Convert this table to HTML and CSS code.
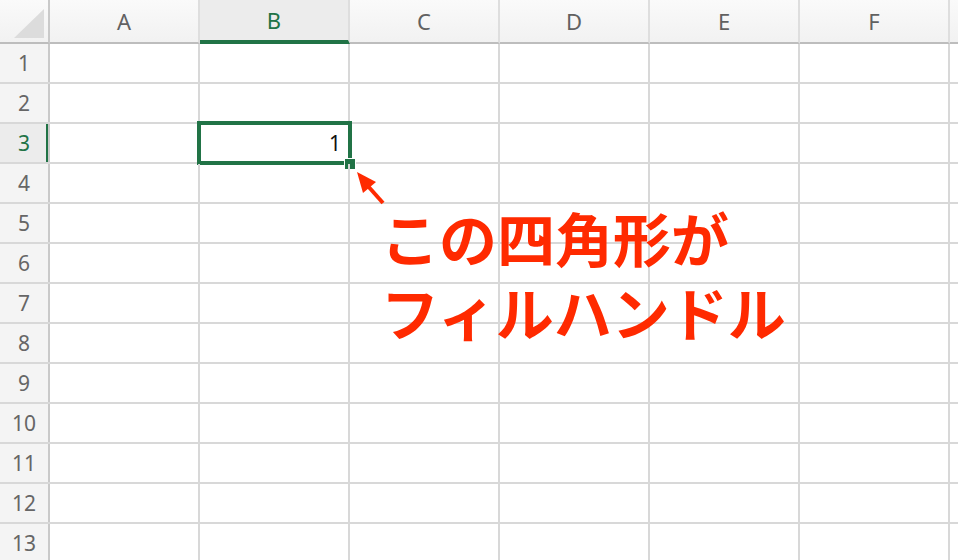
FILE: index.html
```html
<!DOCTYPE html>
<html>
<head>
    <title>フィルハンドル</title>
    <link rel="stylesheet" href="styles.css">
</head>
<body>
    <div class="sheet">
        <div class="row head">
            <div class="rh corner">
                <svg width="48" height="42" viewBox="0 0 48 42"><polygon points="14,38 44,38 44,9" fill="#dcdcdc"/></svg>
            </div>
            <div class="cell ch">A</div>
            <div class="cell ch active-col">B</div>
            <div class="cell ch">C</div>
            <div class="cell ch">D</div>
            <div class="cell ch">E</div>
            <div class="cell ch">F</div>
            <div class="cell ch"></div>
        </div>
        <div class="row"><div class="rh">1</div><div class="cell"></div><div class="cell"></div><div class="cell"></div><div class="cell"></div><div class="cell"></div><div class="cell"></div><div class="cell"></div></div>
        <div class="row"><div class="rh">2</div><div class="cell"></div><div class="cell"></div><div class="cell"></div><div class="cell"></div><div class="cell"></div><div class="cell"></div><div class="cell"></div></div>
        <div class="row">
            <div class="rh active-row">3</div>
            <div class="cell"></div>
            <div class="cell selected">
                <span class="value">1</span>
                <div class="sel-box"></div>
                <div class="fill-handle"></div>
            </div>
            <div class="cell"></div><div class="cell"></div><div class="cell"></div><div class="cell"></div><div class="cell"></div>
        </div>
        <div class="row"><div class="rh">4</div><div class="cell"></div><div class="cell"></div><div class="cell"></div><div class="cell"></div><div class="cell"></div><div class="cell"></div><div class="cell"></div></div>
        <div class="row"><div class="rh">5</div><div class="cell"></div><div class="cell"></div><div class="cell"></div><div class="cell"></div><div class="cell"></div><div class="cell"></div><div class="cell"></div></div>
        <div class="row"><div class="rh">6</div><div class="cell"></div><div class="cell"></div><div class="cell"></div><div class="cell"></div><div class="cell"></div><div class="cell"></div><div class="cell"></div></div>
        <div class="row"><div class="rh">7</div><div class="cell"></div><div class="cell"></div><div class="cell"></div><div class="cell"></div><div class="cell"></div><div class="cell"></div><div class="cell"></div></div>
        <div class="row"><div class="rh">8</div><div class="cell"></div><div class="cell"></div><div class="cell"></div><div class="cell"></div><div class="cell"></div><div class="cell"></div><div class="cell"></div></div>
        <div class="row"><div class="rh">9</div><div class="cell"></div><div class="cell"></div><div class="cell"></div><div class="cell"></div><div class="cell"></div><div class="cell"></div><div class="cell"></div></div>
        <div class="row"><div class="rh">10</div><div class="cell"></div><div class="cell"></div><div class="cell"></div><div class="cell"></div><div class="cell"></div><div class="cell"></div><div class="cell"></div></div>
        <div class="row"><div class="rh">11</div><div class="cell"></div><div class="cell"></div><div class="cell"></div><div class="cell"></div><div class="cell"></div><div class="cell"></div><div class="cell"></div></div>
        <div class="row"><div class="rh">12</div><div class="cell"></div><div class="cell"></div><div class="cell"></div><div class="cell"></div><div class="cell"></div><div class="cell"></div><div class="cell"></div></div>
        <div class="row"><div class="rh">13</div><div class="cell"></div><div class="cell"></div><div class="cell"></div><div class="cell"></div><div class="cell"></div><div class="cell"></div><div class="cell"></div></div>

        <svg class="arrow" width="40" height="40" viewBox="0 0 40 40">
            <line x1="29" y1="34" x2="13" y2="16" stroke="#ff2a00" stroke-width="4"/>
            <polygon points="3,3 22,13 9,24" fill="#ff2a00"/>
        </svg>
        <div class="note">この四角形が<br>フィルハンドル</div>
    </div>
</body>
</html>
```

FILE: styles.css
```css
body {
    margin: 0;
    padding: 0;
    background-color: #fff;
    font-family: "Noto Sans", "Noto Sans CJK JP", sans-serif;
    overflow: hidden;
}

.sheet {
    position: relative;
    width: 958px;
    height: 560px;
    overflow: hidden;
}

.row {
    display: flex;
    height: 38px;
    border-bottom: 2px solid #d8d8d8;
}

.row.head {
    height: 44px;
    border-bottom: none;
    background: linear-gradient(#fafafa, #f1f1f1);
}

.row.head > div {
    border-bottom: 2px solid #bdbdbd;
}

.rh {
    flex: 0 0 48px;
    display: flex;
    align-items: center;
    justify-content: center;
    border-right: 2px solid #c9c9c9;
    background-color: #f4f4f4;
    color: #666;
    font-size: 21px;
}

.rh.corner {
    background: transparent;
}

.rh.active-row {
    color: #217346;
    background-color: #ececec;
    box-shadow: inset -2px 0 0 #217346;
}

.cell {
    flex: 0 0 148px;
    position: relative;
    display: flex;
    align-items: center;
    border-right: 2px solid #d8d8d8;
}

.cell.ch {
    justify-content: center;
    color: #616161;
    font-size: 22px;
    border-right-color: #dedede;
}

.row.head > .cell.active-col {
    color: #217346;
    background-color: #ececec;
    border-bottom: 4px solid #217346;
}

.cell.selected {
    justify-content: flex-end;
}

.value {
    padding-right: 7px;
    font-size: 21px;
    color: #111;
}

.sel-box {
    position: absolute;
    top: -3px;
    left: -3px;
    right: -4px;
    bottom: -3px;
    border: 4px solid #217346;
}

.fill-handle {
    position: absolute;
    right: -8px;
    bottom: -8px;
    width: 10px;
    height: 10px;
    background-color: #217346;
    border: 1px solid #fff;
}

.arrow {
    position: absolute;
    left: 354px;
    top: 169px;
}

.note {
    position: absolute;
    left: 381px;
    top: 200px;
    font-family: "Noto Sans CJK JP", sans-serif;
    font-weight: 700;
    font-size: 58px;
    line-height: 74px;
    color: #ff2a00;
    white-space: nowrap;
}
```
